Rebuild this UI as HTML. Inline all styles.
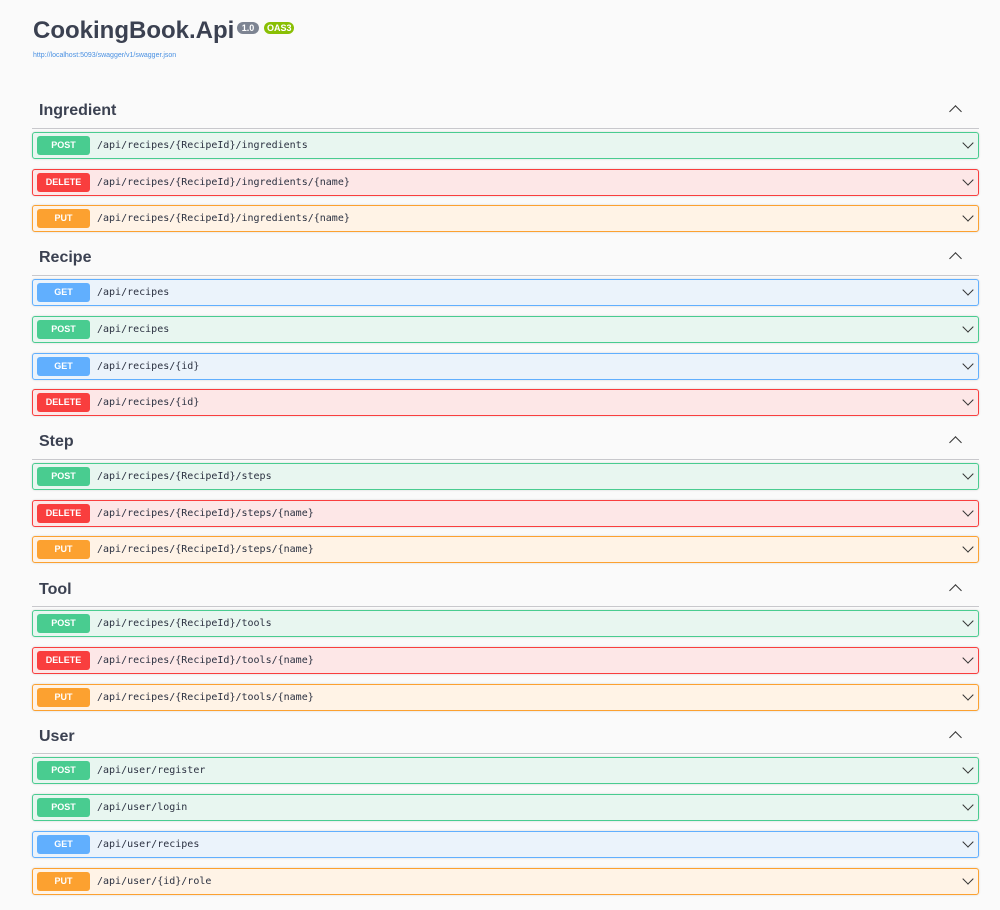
<!DOCTYPE html>
<html><head><meta charset="utf-8"><style>
body{margin:0;background:#fafafa;width:1000px;height:910px;position:relative;font-family:"Liberation Sans",sans-serif;overflow:hidden}
.t{position:absolute;left:33px;top:17px;font-size:24px;font-weight:bold;color:#3b4151}
.v{position:absolute;top:22px;height:12px;border-radius:7px;color:#fff;font-size:9px;font-weight:bold;line-height:12px;padding:0 3px;text-align:center}
.u{position:absolute;left:33px;top:52px;font-size:7px;color:#4990e2}
.h{position:absolute;left:39px;font-size:16px;font-weight:bold;color:#3b4151;line-height:20px}
.hr{position:absolute;left:32px;width:947px;height:1px;background:#c8c8cc}
.up{position:absolute;left:951px;width:8px;height:8px;border-left:1.5px solid #333;border-top:1.5px solid #333;transform:rotate(45deg)}
.r{position:absolute;left:32px;width:945px;height:25px;border:1px solid;border-radius:3px;box-shadow:0 0 2px rgba(0,0,0,.15)}
.r b{position:absolute;left:4px;top:3px;width:53px;height:19px;border-radius:3px;color:#fff;font-size:9px;text-align:center;line-height:19px}
.r span{position:absolute;left:64px;top:0;line-height:25px;font-family:"DejaVu Sans Mono","Liberation Mono",monospace;font-size:10px;color:#2b3141}
.r i{position:absolute;right:6px;top:6px;width:7px;height:7px;border-right:1.5px solid #333;border-bottom:1.5px solid #333;transform:rotate(45deg)}
.post{background:#e8f6f0;border-color:#49cc90}.post b{background:#49cc90}
.del{background:#fde7e7;border-color:#f93e3e}.del b{background:#f93e3e}
.put{background:#fff3e6;border-color:#fca130}.put b{background:#fca130}
.get{background:#ebf3fb;border-color:#61affe}.get b{background:#61affe}
</style></head><body>
<div class="t">CookingBook.Api</div>
<div class="v" style="left:237px;width:16px;background:#7d8492">1.0</div>
<div class="v" style="left:264px;width:24px;background:#89bf04">OAS3</div>
<div class="u">http://localhost:5093/swagger/v1/swagger.json</div>

<div class="h" style="top:101px">Ingredient</div><div class="hr" style="top:128px"></div><div class="up" style="top:107px"></div>
<div class="r post" style="top:132px"><b>POST</b><span>/api/recipes/{RecipeId}/ingredients</span><i></i></div>
<div class="r del" style="top:169px"><b>DELETE</b><span>/api/recipes/{RecipeId}/ingredients/{name}</span><i></i></div>
<div class="r put" style="top:205px"><b>PUT</b><span>/api/recipes/{RecipeId}/ingredients/{name}</span><i></i></div>

<div class="h" style="top:248px">Recipe</div><div class="hr" style="top:275px"></div><div class="up" style="top:254px"></div>
<div class="r get" style="top:279px"><b>GET</b><span>/api/recipes</span><i></i></div>
<div class="r post" style="top:316px"><b>POST</b><span>/api/recipes</span><i></i></div>
<div class="r get" style="top:353px"><b>GET</b><span>/api/recipes/{id}</span><i></i></div>
<div class="r del" style="top:389px"><b>DELETE</b><span>/api/recipes/{id}</span><i></i></div>

<div class="h" style="top:432px">Step</div><div class="hr" style="top:459px"></div><div class="up" style="top:438px"></div>
<div class="r post" style="top:463px"><b>POST</b><span>/api/recipes/{RecipeId}/steps</span><i></i></div>
<div class="r del" style="top:500px"><b>DELETE</b><span>/api/recipes/{RecipeId}/steps/{name}</span><i></i></div>
<div class="r put" style="top:536px"><b>PUT</b><span>/api/recipes/{RecipeId}/steps/{name}</span><i></i></div>

<div class="h" style="top:580px">Tool</div><div class="hr" style="top:606px"></div><div class="up" style="top:586px"></div>
<div class="r post" style="top:610px"><b>POST</b><span>/api/recipes/{RecipeId}/tools</span><i></i></div>
<div class="r del" style="top:647px"><b>DELETE</b><span>/api/recipes/{RecipeId}/tools/{name}</span><i></i></div>
<div class="r put" style="top:684px"><b>PUT</b><span>/api/recipes/{RecipeId}/tools/{name}</span><i></i></div>

<div class="h" style="top:727px">User</div><div class="hr" style="top:753px"></div><div class="up" style="top:733px"></div>
<div class="r post" style="top:757px"><b>POST</b><span>/api/user/register</span><i></i></div>
<div class="r post" style="top:794px"><b>POST</b><span>/api/user/login</span><i></i></div>
<div class="r get" style="top:831px"><b>GET</b><span>/api/user/recipes</span><i></i></div>
<div class="r put" style="top:868px"><b>PUT</b><span>/api/user/{id}/role</span><i></i></div>
</body></html>
